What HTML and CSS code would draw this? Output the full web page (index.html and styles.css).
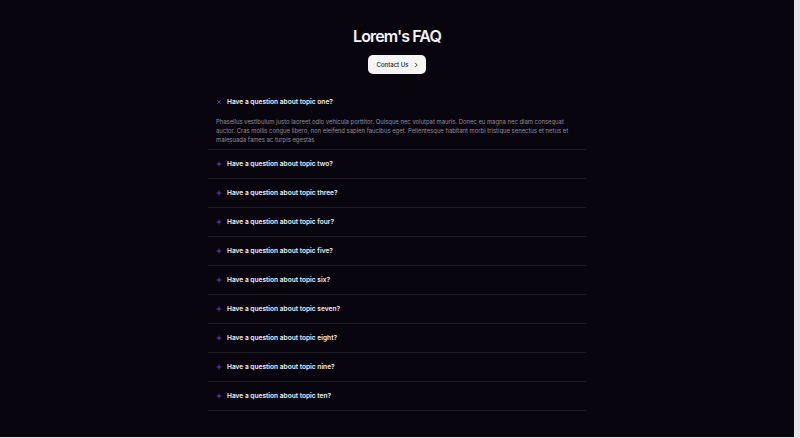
FILE: index.html
```html
<!DOCTYPE html>
<html lang="en">
<head>
  <title>Lorem's FAQ</title>
  <meta charset="UTF-8">
  <meta name="viewport" content="width=device-width, initial-scale=1.0">
  <link rel="stylesheet" href="styles.css">
</head>
<body>
  <div class="page">
    <h1 class="title">Lorem's FAQ</h1>
    <button class="contact-btn">Contact Us
      <svg class="chevron" viewBox="0 0 10 10"><path d="M3.5 1.5 L7 5 L3.5 8.5" /></svg>
    </button>

    <div class="faq-list">
      <div class="faq-item open">
        <div class="question">
          <svg class="icon" viewBox="0 0 10 10"><path d="M2 2 L8 8 M8 2 L2 8" /></svg>
          <span>Have a question about topic one?</span>
        </div>
        <p class="answer">Phasellus vestibulum justo laoreet odio vehicula porttitor. Quisque nec volutpat mauris. Donec eu magna nec diam consequat auctor. Cras mollis congue libero, non eleifend sapien faucibus eget. Pellentesque habitant morbi tristique senectus et netus et malesuada fames ac turpis egestas</p>
      </div>
      <div class="faq-item">
        <div class="question">
          <svg class="icon" viewBox="0 0 10 10"><path d="M5 1 L5 9 M1 5 L9 5" /></svg>
          <span>Have a question about topic two?</span>
        </div>
      </div>
      <div class="faq-item">
        <div class="question">
          <svg class="icon" viewBox="0 0 10 10"><path d="M5 1 L5 9 M1 5 L9 5" /></svg>
          <span>Have a question about topic three?</span>
        </div>
      </div>
      <div class="faq-item">
        <div class="question">
          <svg class="icon" viewBox="0 0 10 10"><path d="M5 1 L5 9 M1 5 L9 5" /></svg>
          <span>Have a question about topic four?</span>
        </div>
      </div>
      <div class="faq-item">
        <div class="question">
          <svg class="icon" viewBox="0 0 10 10"><path d="M5 1 L5 9 M1 5 L9 5" /></svg>
          <span>Have a question about topic five?</span>
        </div>
      </div>
      <div class="faq-item">
        <div class="question">
          <svg class="icon" viewBox="0 0 10 10"><path d="M5 1 L5 9 M1 5 L9 5" /></svg>
          <span>Have a question about topic six?</span>
        </div>
      </div>
      <div class="faq-item">
        <div class="question">
          <svg class="icon" viewBox="0 0 10 10"><path d="M5 1 L5 9 M1 5 L9 5" /></svg>
          <span>Have a question about topic seven?</span>
        </div>
      </div>
      <div class="faq-item">
        <div class="question">
          <svg class="icon" viewBox="0 0 10 10"><path d="M5 1 L5 9 M1 5 L9 5" /></svg>
          <span>Have a question about topic eight?</span>
        </div>
      </div>
      <div class="faq-item">
        <div class="question">
          <svg class="icon" viewBox="0 0 10 10"><path d="M5 1 L5 9 M1 5 L9 5" /></svg>
          <span>Have a question about topic nine?</span>
        </div>
      </div>
      <div class="faq-item">
        <div class="question">
          <svg class="icon" viewBox="0 0 10 10"><path d="M5 1 L5 9 M1 5 L9 5" /></svg>
          <span>Have a question about topic ten?</span>
        </div>
      </div>
    </div>
  </div>
</body>
</html>
```

FILE: styles.css
```css
html {
  background-color: #e6e6e8;
}
body {
  margin: 0;
  font-family: Inter, 'Noto Sans', sans-serif;
  color: #ececf1;
}
.page {
  width: 794px;
  height: 437px;
  box-sizing: border-box;
  padding-top: 25px;
  background-color: #09050f;
  display: flex;
  flex-direction: column;
  align-items: center;
}
.title {
  margin: 0;
  font-size: 16px;
  line-height: 22px;
  font-weight: 600;
  letter-spacing: -0.9px;
  color: #f4f4f6;
}
.contact-btn {
  margin-top: 8px;
  height: 19px;
  width: 58px;
  padding: 0 0 0 2px;
  border: none;
  border-radius: 5px;
  background-color: #f4f4f5;
  color: #1a1720;
  font-family: inherit;
  font-size: 6px;
  font-weight: 500;
  display: flex;
  align-items: center;
  justify-content: center;
  gap: 5px;
}
.chevron {
  width: 6px;
  height: 6px;
  fill: none;
  stroke: #2a2630;
  stroke-width: 1.4;
}
.faq-list {
  margin-top: 14px;
  width: 378px;
}
.faq-item {
  border-bottom: 1px solid #221d29;
  padding: 10px 8px 10px 8px;
}
.faq-item.open {
  padding-bottom: 5px;
}
.question {
  display: flex;
  align-items: center;
  gap: 5px;
  font-size: 6.6px;
  line-height: 8px;
  font-weight: 600;
  color: #f0f0f4;
}
.icon {
  width: 6px;
  height: 6px;
  fill: none;
  stroke: #8152e0;
  stroke-width: 1.2;
}
.answer {
  margin: 11px 0 0 0;
  font-size: 5.9px;
  line-height: 9px;
  color: #928e9c;
}
```
